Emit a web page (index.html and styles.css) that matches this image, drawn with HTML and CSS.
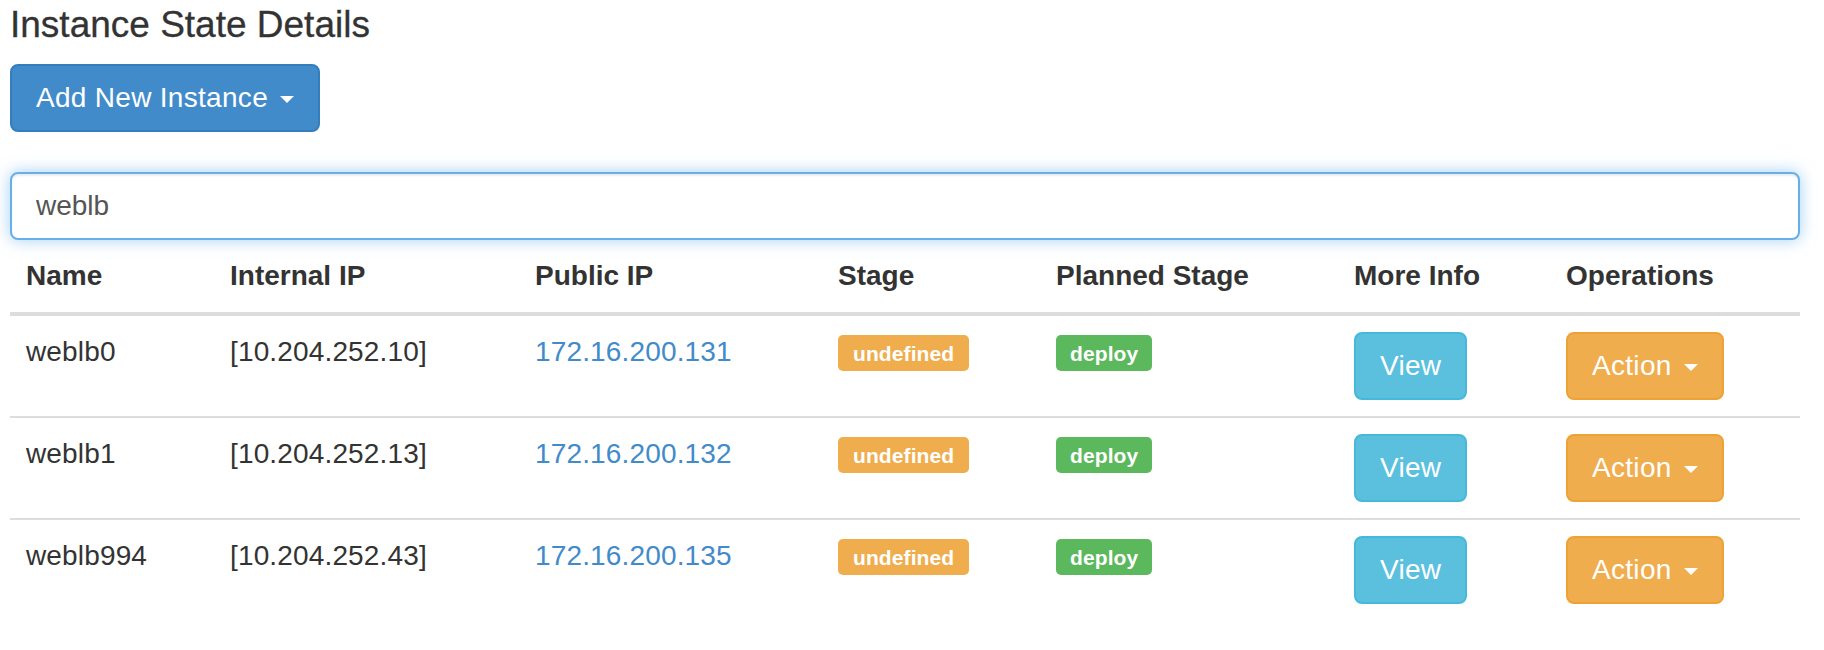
FILE: index.html
```html
<!DOCTYPE html>
<html lang="en">
<head>
<meta charset="utf-8">
<title>Instance State Details</title>
<link rel="stylesheet" href="styles.css">
</head>
<body>
<div class="page">
  <h4 class="title">Instance State Details</h4>
  <div class="toolbar">
    <button class="btn btn-primary" type="button">Add New Instance <span class="caret"></span></button>
  </div>
  <input class="search" type="text" value="weblb">
  <table class="grid">
    <colgroup>
      <col class="c-name"><col class="c-internal"><col class="c-public"><col class="c-stage"><col class="c-planned"><col class="c-info"><col class="c-ops">
    </colgroup>
    <thead>
      <tr><th>Name</th><th>Internal IP</th><th>Public IP</th><th>Stage</th><th>Planned Stage</th><th>More Info</th><th>Operations</th></tr>
    </thead>
    <tbody>
      <tr>
        <td>weblb0</td><td>[10.204.252.10]</td><td><a class="link" href="#">172.16.200.131</a></td>
        <td><span class="label label-warning">undefined</span></td><td><span class="label label-success">deploy</span></td>
        <td><button class="btn btn-info" type="button">View</button></td>
        <td><button class="btn btn-warning" type="button">Action <span class="caret"></span></button></td>
      </tr>
      <tr>
        <td>weblb1</td><td>[10.204.252.13]</td><td><a class="link" href="#">172.16.200.132</a></td>
        <td><span class="label label-warning">undefined</span></td><td><span class="label label-success">deploy</span></td>
        <td><button class="btn btn-info" type="button">View</button></td>
        <td><button class="btn btn-warning" type="button">Action <span class="caret"></span></button></td>
      </tr>
      <tr>
        <td>weblb994</td><td>[10.204.252.43]</td><td><a class="link" href="#">172.16.200.135</a></td>
        <td><span class="label label-warning">undefined</span></td><td><span class="label label-success">deploy</span></td>
        <td><button class="btn btn-info" type="button">View</button></td>
        <td><button class="btn btn-warning" type="button">Action <span class="caret"></span></button></td>
      </tr>
    </tbody>
  </table>
</div>
</body>
</html>
```

FILE: styles.css
```css
html, body {
  margin: 0;
  padding: 0;
  background: #fff;
}
body {
  font-family: "Liberation Sans", Arial, Helvetica, sans-serif;
  font-size: 28px;
  line-height: 40px;
  color: #333;
}
.page {
  width: 1790px;
  padding-left: 10px;
}
.title {
  margin: 5px 0 19px;
  font-size: 37px;
  line-height: 40px;
  font-weight: 500;
  color: #333;
  -webkit-text-stroke: 0.3px #333;
}
.toolbar {
  margin-bottom: 40px;
}
.btn {
  display: inline-block;
  margin: 0;
  padding: 12px 24px;
  font-family: inherit;
  font-size: 28px;
  line-height: 40px;
  font-weight: normal;
  letter-spacing: 0.3px;
  color: #fff;
  border: 2px solid transparent;
  border-radius: 8px;
  white-space: nowrap;
  cursor: pointer;
  vertical-align: middle;
}
.btn-primary { background: #428bca; border-color: #357ebd; }
.btn-info { background: #5bc0de; border-color: #46b8da; }
.btn-warning { background: #f0ad4e; border-color: #eea236; }
.caret {
  display: inline-block;
  width: 0;
  height: 0;
  margin-left: 4px;
  vertical-align: middle;
  border-top: 7px solid #fff;
  border-left: 7px solid transparent;
  border-right: 7px solid transparent;
}
.search {
  display: block;
  box-sizing: border-box;
  width: 100%;
  height: 68px;
  margin: 0;
  padding: 12px 24px;
  font-family: inherit;
  font-size: 28px;
  line-height: 40px;
  color: #555;
  background: #fff;
  border: 2px solid #66afe9;
  border-radius: 8px;
  outline: none;
  box-shadow: inset 0 2px 2px rgba(0,0,0,0.075), 0 0 16px rgba(102,175,233,0.6);
}
.grid {
  width: 100%;
  table-layout: fixed;
  border-collapse: separate;
  border-spacing: 0;
}
.c-name { width: 204px; }
.c-internal { width: 305px; }
.c-public { width: 303px; }
.c-stage { width: 218px; }
.c-planned { width: 298px; }
.c-info { width: 212px; }
.c-ops { width: 250px; }
.grid th {
  padding: 16px;
  text-align: left;
  font-weight: bold;
  vertical-align: bottom;
  border-bottom: 4px solid #ddd;
}
.grid td {
  padding: 16px;
  vertical-align: top;
  letter-spacing: 0.15px;
}
.grid tbody tr + tr td {
  border-top: 2px solid #ddd;
}
.link {
  color: #428bca;
  text-decoration: none;
}
.label {
  display: inline-block;
  padding: 6px 15px 4px;
  font-size: 21px;
  line-height: 26px;
  font-weight: bold;
  letter-spacing: 0.1px;
  color: #fff;
  border-radius: 5px;
  white-space: nowrap;
  vertical-align: baseline;
}
.label-warning { background: #f0ad4e; }
.label-success { background: #5cb85c; padding-left: 14px; padding-right: 14px; }
```
